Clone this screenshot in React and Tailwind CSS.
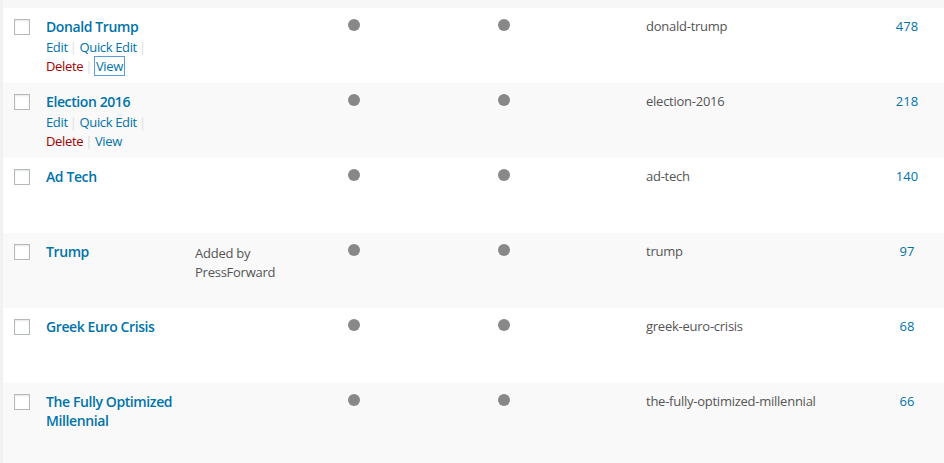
import React from "react";

const rows = [
  { name: ["Donald Trump"], slug: "donald-trump", count: 478, actions: "focus" },
  { name: ["Election 2016"], slug: "election-2016", count: 218, actions: "show" },
  { name: ["Ad Tech"], slug: "ad-tech", count: 140 },
  { name: ["Trump"], slug: "trump", count: 97, desc: true },
  { name: ["Greek Euro Crisis"], slug: "greek-euro-crisis", count: 68 },
  { name: ["The Fully Optimized", "Millennial"], slug: "the-fully-optimized-millennial", count: 66 },
];

function Sep() {
  return <span className="text-[#dddddd] ml-[2px] mr-[3px]">|</span>;
}

function Actions({ focus }) {
  return (
    <div className="pt-[2px] text-[13px] leading-[19px] tracking-[-0.35px] whitespace-nowrap">
      <div>
        <span className="text-[#0073aa]">Edit</span>
        <Sep />
        <span className="text-[#0073aa]">Quick Edit</span>
        <Sep />
      </div>
      <div>
        <span className="text-[#a00000]">Delete</span>
        <Sep />
        <span
          className={
            focus
              ? "text-[#0073aa] outline outline-1 outline-[#5b9dd9] px-[1px]"
              : "text-[#0073aa]"
          }
        >
          View
        </span>
      </div>
    </div>
  );
}

function Row({ r, i }) {
  const bg = i % 2 === 0 ? "bg-white" : "bg-[#f9f9f9]";
  return (
    <div className={`flex h-[75px] ${bg}`}>
      <div className="w-[33px] shrink-0 pl-[11px] pt-[11px]">
        <div className="w-[16px] h-[16px] border border-[#b4b9be] bg-white shadow-[inset_0_1px_2px_rgba(0,0,0,0.1)]" />
      </div>
      <div className="w-[149px] shrink-0 pl-[10px] pt-[9px]">
        <div className="text-[14px] leading-[19px] font-semibold text-[#0073aa] tracking-[-0.4px] whitespace-nowrap">
          {r.name.map((n, k) => (
            <div key={k}>{n}</div>
          ))}
        </div>
        {r.actions && <Actions focus={r.actions === "focus"} />}
      </div>
      <div className="w-[125px] shrink-0 pl-[10px] pr-[10px] pt-[11px] text-[13px] leading-[19px] text-[#555555] tracking-[-0.25px] whitespace-nowrap">
        {r.desc && (
          <>
            <div>Added by</div>
            <div>PressForward</div>
          </>
        )}
      </div>
      <div className="w-[150px] shrink-0 pt-[11px] pl-[38px]">
        <div className="w-[12px] h-[12px] rounded-full bg-[#888888]" />
      </div>
      <div className="w-[176px] shrink-0 pt-[11px] pl-[38px]">
        <div className="w-[12px] h-[12px] rounded-full bg-[#888888]" />
      </div>
      <div className="w-[224px] shrink-0 pl-[10px] pt-[9px] text-[13px] leading-[19px] text-[#555555] tracking-[-0.25px] whitespace-nowrap">
        {r.slug}
      </div>
      <div className="w-[94px] shrink-0 pt-[9px] text-center text-[13px] leading-[19px] text-[#0073aa]">
        {r.count}
      </div>
    </div>
  );
}

export default function App() {
  return (
    <div
      className="w-[944px] h-[463px] overflow-hidden bg-[#f9f9f9] flex"
      style={{ fontFamily: '"Open Sans", "Noto Sans", sans-serif' }}
    >
      <div className="w-[3px] shrink-0 bg-[#f1f1f1]" />
      <div className="flex-1 flex flex-col">
        <div className="h-[8px] shrink-0 bg-[#f7f7f7]" />
        {rows.map((r, i) => (
          <Row key={i} r={r} i={i} />
        ))}
      </div>
    </div>
  );
}
